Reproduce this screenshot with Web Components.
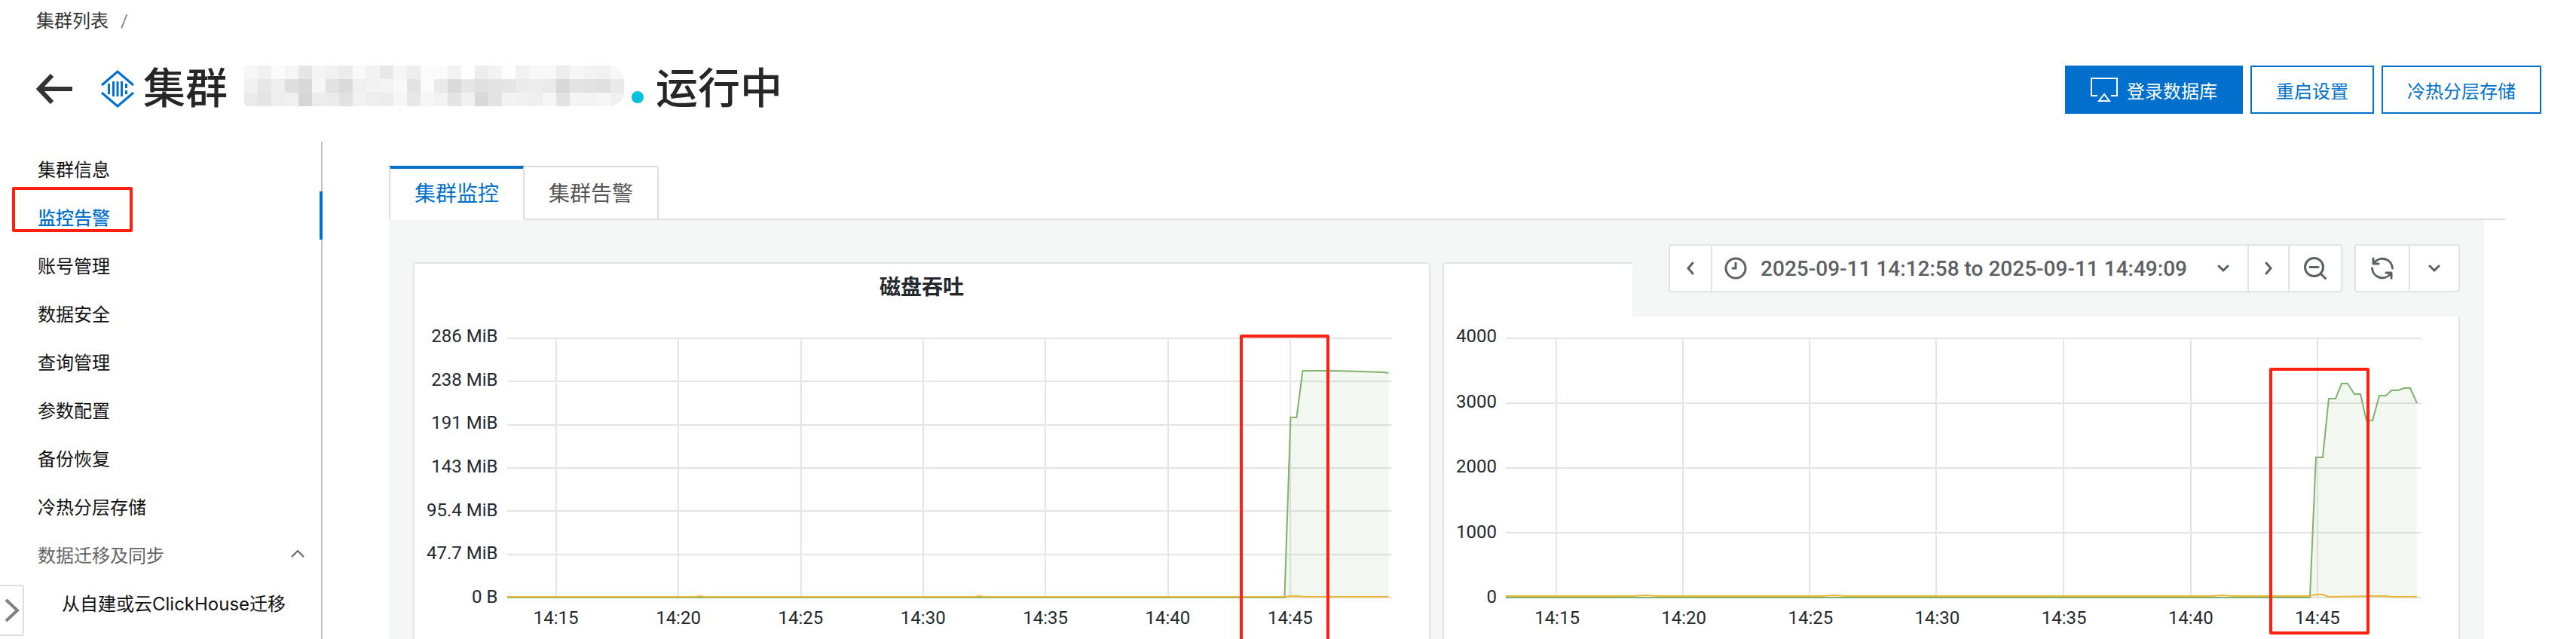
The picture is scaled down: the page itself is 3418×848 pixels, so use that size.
<!DOCTYPE html>
<html lang="zh-CN">
<head>
<meta charset="utf-8">
<title>集群监控</title>
<style>
    body {
        margin: 0;
        background-color: #fff;
        color: #333;
        font-family: Roboto, "Noto Sans CJK SC", sans-serif;
        font-size: 24px;
    }
</style>
</head>
<body>
<cluster-page>
    <page-crumb slot="crumb">集群列表</page-crumb>
    <cluster-header slot="header" name="集群" status="运行中">
        <action-button type="primary" icon="screen">登录数据库</action-button>
        <action-button>重启设置</action-button>
        <action-button>冷热分层存储</action-button>
    </cluster-header>
    <side-nav slot="nav">
        <nav-item>集群信息</nav-item>
        <nav-item active>监控告警</nav-item>
        <nav-item>账号管理</nav-item>
        <nav-item>数据安全</nav-item>
        <nav-item>查询管理</nav-item>
        <nav-item>参数配置</nav-item>
        <nav-item>备份恢复</nav-item>
        <nav-item>冷热分层存储</nav-item>
        <nav-item group>数据迁移及同步</nav-item>
        <nav-item sub>从自建或云ClickHouse迁移</nav-item>
    </side-nav>
    <tab-bar tabs="集群监控,集群告警"></tab-bar>
    <monitor-board>
        <time-toolbar slot="toolbar" range="2025-09-11 14:12:58 to 2025-09-11 14:49:09"></time-toolbar>
        <chart-panel name="磁盘吞吐" source="disk"></chart-panel>
        <chart-panel source="rows"></chart-panel>
    </monitor-board>
</cluster-page>
<drawer-handle></drawer-handle>

<script>
const ICONS = {
    back: `<svg width="48" height="40" viewBox="0 0 48 40" fill="none" stroke="#333" stroke-width="6"><path d="M4 20H48M21 2L4 20L21 38"/></svg>`,
    logo: `<svg width="44" height="50" viewBox="0 0 44 50" fill="none" stroke="#0070cc" stroke-width="3"><path d="M1 20L22 2L43 20M1 30L22 48L43 30"/><path d="M10.500 18V32M16.500 15V35M22 15V35M27.500 15V35M33.500 18V24M33.500 27V32"/></svg>`,
    screen: `<svg width="36" height="32" viewBox="0 0 36 32" fill="none" stroke="#fff" stroke-width="2"><path d="M9 24H1V1H35V24H27"/><path d="M18 22L11 31H25Z"/></svg>`,
    left: `<svg width="12" height="20" viewBox="0 0 12 20" fill="none" stroke="#5c6064" stroke-width="3" stroke-linecap="round"><path d="M9 3L3 10L9 17"/></svg>`,
    right: `<svg width="12" height="20" viewBox="0 0 12 20" fill="none" stroke="#5c6064" stroke-width="3" stroke-linecap="round"><path d="M3 3L9 10L3 17"/></svg>`,
    down: `<svg width="16" height="12" viewBox="0 0 16 12" fill="none" stroke="#5c6064" stroke-width="3" stroke-linecap="round"><path d="M2 3L8 9L14 3"/></svg>`,
    up: `<svg width="18" height="12" viewBox="0 0 18 12" fill="none" stroke="#666" stroke-width="2"><path d="M1 10L9 2L17 10"/></svg>`,
    clock: `<svg width="30" height="30" viewBox="0 0 30 30" fill="none" stroke="#5c6064" stroke-width="3" stroke-linecap="round"><circle cx="15" cy="15" r="13"/><path d="M15 8V15H11"/></svg>`,
    zoomOut: `<svg width="30" height="30" viewBox="0 0 30 30" fill="none" stroke="#5c6064" stroke-width="3" stroke-linecap="round"><circle cx="13.500" cy="13.500" r="12"/><path d="M8 13.500H19M22 22L28.500 28.500"/></svg>`,
    refresh: `<svg width="30" height="30" viewBox="0 0 30 30" fill="none" stroke="#5c6064" stroke-width="3" stroke-linecap="round" stroke-linejoin="round"><path d="M3 2V9H10M4 8A13.500 13.500 0 0 1 28.500 15M1.500 15A13.500 13.500 0 0 0 26 22M20 21H27V28"/></svg>`
};

// grey level of every mosaic tile, row by row
const MOSAIC = [
    'f7 f1 fb f6 e5 f4 f1 ec f9 f2 e8 f6 ee fa fa f3 ff ed f3 fd f2 f8 f8 ed f6 f3 f1 f7',
    'f1 e7 ef df d9 f5 e2 da f0 f2 f4 f9 e3 fb ea db e6 e0 e3 e5 eb ec ea d8 e3 e2 df ea',
    'ea e5 ee f0 d6 ec eb e1 f2 ee ec f6 e8 f5 f3 e3 f1 d9 e3 f3 f1 ef f6 e2 f4 f4 f6 f0'
];

const CHARTS = {
    disk: {
        width: 1174,
        rows: ['286 MiB', '238 MiB', '191 MiB', '143 MiB', '95.4 MiB', '47.7 MiB', '0 B'],
        first: 65,
        step: 162.3,
        green: [[0, 345], [1031, 345], [1039, 106], [1047, 106], [1055, 44], [1082, 44], [1115, 44.5], [1162, 46], [1169, 47]],
        yellow: [[0, 344], [250, 344], [256, 343], [262, 344], [620, 344], [626, 343], [632, 344], [1031, 344], [1039, 343], [1047, 343], [1060, 344], [1169, 344]],
        mark: 'left: 972px; width: 111px; top: -4px; bottom: -80px'
    },
    rows: {
        width: 1214,
        rows: ['4000', '3000', '2000', '1000', '0'],
        first: 67,
        step: 168.1,
        green: [[0, 345], [1066, 345], [1074, 159], [1083, 159], [1091, 81], [1100, 81], [1108, 61], [1116, 61], [1125, 75], [1133, 75], [1141, 110], [1149, 110], [1158, 77], [1167, 77], [1174, 70], [1183, 70], [1191, 67], [1199, 67], [1208, 87]],
        yellow: [[0, 343], [170, 343], [185, 342], [200, 343], [420, 343], [435, 342], [450, 343], [935, 343], [950, 342], [965, 343], [1066, 343], [1074, 341], [1083, 341], [1091, 344], [1160, 343], [1167, 343], [1175, 344], [1208, 344]],
        mark: 'left: 1013px; width: 125px; top: 40px; bottom: -48px'
    }
};

const TIMES = ['14:15', '14:20', '14:25', '14:30', '14:35', '14:40', '14:45'];

class BaseElement extends HTMLElement {
    constructor() {
        super();
        this.attachShadow({ mode: 'open' });
    }
    connectedCallback() {
        this.shadowRoot.innerHTML = `${this.getStyles()}${this.getTemplate()}`;
    }
}

class ClusterPage extends BaseElement {
    getTemplate() {
        return `
            <slot name="crumb"></slot>
            <slot name="header"></slot>
            <div class="body">
                <slot name="nav"></slot>
                <main><slot></slot></main>
            </div>
        `;
    }
    getStyles() {
        return `
            <style>
                :host {
                    display: flex;
                    flex-direction: column;
                    height: 100vh;
                    overflow: hidden;
                }
                .body {
                    display: flex;
                    flex: 1;
                    min-height: 0;
                }
                main {
                    display: flex;
                    flex-direction: column;
                    flex: 1;
                    min-width: 0;
                    padding: 32px 94px 0 88px;
                }
            </style>
        `;
    }
}

class PageCrumb extends BaseElement {
    getTemplate() {
        return `<a href="#"><slot></slot></a><span>/</span>`;
    }
    getStyles() {
        return `
            <style>
                :host {
                    display: flex;
                    gap: 16px;
                    padding: 0 48px;
                    line-height: 56px;
                }
                a {
                    color: #333;
                    text-decoration: none;
                }
                span {
                    color: #888;
                }
            </style>
        `;
    }
}

class ClusterHeader extends BaseElement {
    getMosaic() {
        const tiles = MOSAIC.map((row, y) => row.split(' ').map((g, x) =>
            `<rect x="${x * 18}" y="${y * 18}" width="18" height="18" fill="#${g}${g}${g}"/>`).join('')).join('');
        return `<svg class="mosaic" width="504" height="54" viewBox="0 0 504 54">${tiles}</svg>`;
    }
    getTemplate() {
        return `
            <button class="back" aria-label="返回">${ICONS.back}</button>
            ${ICONS.logo}
            <h1>${this.getAttribute('name')}</h1>
            ${this.getMosaic()}
            <div class="status"><i></i>${this.getAttribute('status')}</div>
            <div class="actions"><slot></slot></div>
        `;
    }
    getStyles() {
        return `
            <style>
                :host {
                    display: flex;
                    align-items: center;
                    height: 124px;
                    margin-bottom: 8px;
                    padding: 0 46px 0 48px;
                    color: #262626;
                }
                svg {
                    display: block;
                }
                .back {
                    margin-right: 38px;
                    padding: 0;
                    border: 0;
                    background: none;
                }
                h1, .status {
                    margin: 0;
                    font-size: 56px;
                    font-weight: 500;
                    line-height: 80px;
                    white-space: nowrap;
                }
                h1 {
                    margin: 0 22px 0 12px;
                }
                .mosaic {
                    margin-bottom: 8px;
                    border-radius: 0 20px 20px 6px;
                }
                .status i {
                    display: inline-block;
                    width: 16px;
                    height: 16px;
                    margin: 0 16px 0 10px;
                    border-radius: 50%;
                    background-color: #00c1de;
                }
                .actions {
                    display: flex;
                    gap: 10px;
                    margin-left: auto;
                    padding-top: 2px;
                }
            </style>
        `;
    }
}

class ActionButton extends BaseElement {
    getTemplate() {
        return `<button>${ICONS[this.getAttribute('icon')] || ''}<slot></slot></button>`;
    }
    getStyles() {
        return `
            <style>
                :host {
                    display: block;
                    --fg: #0070cc;
                    --bg: #fff;
                }
                :host([type="primary"]) {
                    --fg: #fff;
                    --bg: #0070cc;
                }
                button {
                    display: flex;
                    align-items: center;
                    gap: 12px;
                    height: 64px;
                    padding: 0 32px;
                    border: 2px solid #0070cc;
                    background-color: var(--bg);
                    color: var(--fg);
                    font: inherit;
                    font-size: 24px;
                    white-space: nowrap;
                }
            </style>
        `;
    }
}

class SideNav extends BaseElement {
    getTemplate() {
        return `<nav><slot></slot></nav>`;
    }
    getStyles() {
        return `
            <style>
                :host {
                    display: block;
                    box-sizing: border-box;
                    width: 428px;
                    padding-top: 2px;
                    background: linear-gradient(#c1c1c1, #c1c1c1) right / 2px 100% no-repeat;
                    font-family: Inter, "Noto Sans CJK SC", sans-serif;
                }
            </style>
        `;
    }
}

class NavItem extends BaseElement {
    getTemplate() {
        return `
            <a href="#"><slot></slot></a>
            ${this.hasAttribute('group') ? ICONS.up : ''}
            ${this.hasAttribute('active') ? '<div class="mark"></div>' : ''}
        `;
    }
    getStyles() {
        return `
            <style>
                :host {
                    display: flex;
                    position: relative;
                    align-items: center;
                    justify-content: space-between;
                    box-sizing: border-box;
                    height: 64px;
                    padding: 2px 20px 0 50px;
                    border-right: 4px solid transparent;
                    color: #111;
                }
                :host([active]) {
                    border-color: #0070cc;
                    color: #0070cc;
                    font-weight: 500;
                }
                :host([group]) {
                    color: #666;
                }
                :host([sub]) {
                    padding-left: 82px;
                }
                a {
                    color: inherit;
                    text-decoration: none;
                    white-space: nowrap;
                }
                .mark {
                    position: absolute;
                    box-sizing: border-box;
                    left: 16px;
                    top: -6px;
                    width: 160px;
                    height: 60px;
                    border: 4px solid #ff2010;
                    border-radius: 2px;
                }
            </style>
        `;
    }
}

class TabBar extends BaseElement {
    getTemplate() {
        const tabs = this.getAttribute('tabs').split(',');
        return tabs.map((tab, i) =>
            `<button role="tab" aria-selected="${i === 0}">${tab}</button>`).join('') + '<div></div>';
    }
    getStyles() {
        return `
            <style>
                :host {
                    display: flex;
                    height: 72px;
                }
                button {
                    box-sizing: border-box;
                    padding: 0 32px 2px;
                    border: 2px solid #dedede;
                    border-left-width: 0;
                    background-color: #fff;
                    color: #555;
                    font: inherit;
                    font-size: 28px;
                }
                button[aria-selected="true"] {
                    border-left-width: 2px;
                    border-bottom-color: #fff;
                    color: #0070cc;
                    box-shadow: inset 0 2px #0070cc;
                    border-top-color: #0070cc;
                }
                div {
                    flex: 1;
                    border-bottom: 2px solid #dedede;
                }
            </style>
        `;
    }
}

class MonitorBoard extends BaseElement {
    getTemplate() {
        return `
            <div class="panels"><slot></slot></div>
            <div class="toolbar"><slot name="toolbar"></slot></div>
        `;
    }
    getStyles() {
        return `
            <style>
                :host {
                    display: block;
                    position: relative;
                    flex: 1;
                    margin-right: 28px;
                    background-color: #f4f6f5;
                }
                .panels {
                    display: grid;
                    grid-template-columns: 1fr 1fr;
                    gap: 16px;
                    box-sizing: border-box;
                    height: 100%;
                    padding: 56px 32px 0;
                }
                .toolbar {
                    position: absolute;
                    top: 0;
                    right: 0;
                    padding: 32px 32px 32px 48px;
                    background-color: #f4f6f5;
                }
            </style>
        `;
    }
}

class TimeToolbar extends BaseElement {
    getTemplate() {
        return `
            <div class="group">
                <button class="step" aria-label="向前">${ICONS.left}</button>
                <button class="range">${ICONS.clock}<span>${this.getAttribute('range')}</span>${ICONS.down}</button>
                <button class="step" aria-label="向后">${ICONS.right}</button>
                <button class="tool" aria-label="缩小">${ICONS.zoomOut}</button>
            </div>
            <div class="group">
                <button class="tool" aria-label="刷新">${ICONS.refresh}</button>
                <button class="menu" aria-label="刷新间隔">${ICONS.down}</button>
            </div>
        `;
    }
    getStyles() {
        return `
            <style>
                :host {
                    display: flex;
                    gap: 16px;
                }
                .group {
                    display: flex;
                    box-sizing: border-box;
                    height: 64px;
                    border: 2px solid #e2e4e4;
                    border-radius: 4px;
                    background-color: #fff;
                }
                button {
                    display: flex;
                    align-items: center;
                    justify-content: center;
                    padding: 0;
                    border: 0;
                    background: none;
                    color: #5c6064;
                    font: inherit;
                    font-size: 28px;
                    font-weight: 500;
                }
                button + button {
                    border-left: 2px solid #e2e4e4;
                }
                .step {
                    width: 54px;
                }
                .tool {
                    width: 70px;
                }
                .menu {
                    width: 66px;
                }
                .range {
                    padding: 0 24px 0 16px;
                }
                .range span {
                    margin: 0 40px 0 18px;
                    white-space: nowrap;
                }
            </style>
        `;
    }
}

class ChartPanel extends BaseElement {
    getGrid(chart) {
        let d = '';
        chart.rows.forEach((row, i) => {
            d += `M0 ${Math.round(1 + i * 344 / (chart.rows.length - 1))}H${chart.width}`;
        });
        TIMES.forEach((time, i) => {
            d += `M${Math.round(chart.first + i * chart.step)} 0V346`;
        });
        return d;
    }
    getTemplate() {
        const chart = CHARTS[this.getAttribute('source')];
        const last = chart.green[chart.green.length - 1][0];
        return `
            <h2>${this.getAttribute('name') || ''}</h2>
            <div class="chart">
                <div class="rows">${chart.rows.map(row => `<span>${row}</span>`).join('')}</div>
                <div class="plot">
                    <svg viewBox="0 0 ${chart.width} 346" preserveAspectRatio="none">
                        <path class="grid" d="${this.getGrid(chart)}"/>
                        <polygon points="${chart.green.join(' ')} ${last},345 0,345"/>
                        <polyline class="green" points="${chart.green.join(' ')}"/>
                        <polyline class="yellow" points="${chart.yellow.join(' ')}"/>
                    </svg>
                    <div class="mark" style="${chart.mark}"></div>
                </div>
                <div class="times">${TIMES.map(time => `<span>${time}</span>`).join('')}</div>
            </div>
        `;
    }
    getStyles() {
        return `
            <style>
                :host {
                    display: block;
                    min-width: 0;
                    overflow: hidden;
                    border: 2px solid #e2e4e4;
                    border-bottom: 0;
                    border-radius: 6px 6px 0 0;
                    background-color: #fff;
                    color: #24292e;
                }
                h2 {
                    height: 64px;
                    margin: 0 0 34px;
                    font-size: 28px;
                    font-weight: 700;
                    line-height: 64px;
                    text-align: center;
                }
                .chart {
                    display: grid;
                    grid-template-columns: auto 1fr;
                    column-gap: 12px;
                    padding: 0 49px 0 16px;
                    line-height: 28px;
                }
                .rows {
                    display: flex;
                    flex-direction: column;
                    justify-content: space-between;
                    margin: -16px 0 -12px;
                    text-align: right;
                }
                .plot {
                    position: relative;
                    height: 346px;
                }
                .times {
                    display: grid;
                    grid-template-columns: repeat(7, 1fr);
                    grid-column: 2;
                    margin: 12px 54px 0 -16px;
                    text-align: center;
                }
                svg {
                    display: block;
                    width: 100%;
                    height: 100%;
                    fill: none;
                    stroke-width: 2px;
                }
                .grid {
                    stroke: rgba(0, 0, 0, .1);
                    shape-rendering: crispEdges;
                }
                polygon {
                    fill: rgba(126, 178, 109, .1);
                }
                .green {
                    stroke: #7eb26d;
                }
                .yellow {
                    stroke: #eab839;
                }
                .mark {
                    position: absolute;
                    border: 4px solid #ff2010;
                    border-radius: 2px;
                }
            </style>
        `;
    }
}

class DrawerHandle extends BaseElement {
    getTemplate() {
        return `
            <button aria-label="展开">
                <svg width="20" height="32" viewBox="0 0 20 32" fill="none" stroke="#808080" stroke-width="4"><path d="M2 2L17 16L2 30"/></svg>
            </button>
        `;
    }
    getStyles() {
        return `
            <style>
                :host {
                    display: block;
                    position: fixed;
                    left: 0;
                    bottom: 4px;
                }
                button {
                    display: flex;
                    align-items: center;
                    box-sizing: border-box;
                    width: 32px;
                    height: 68px;
                    padding: 0 0 0 6px;
                    border: 2px solid #dedede;
                    border-left: 0;
                    border-radius: 0 4px 4px 0;
                    background-color: #fff;
                }
            </style>
        `;
    }
}

customElements.define('cluster-page', ClusterPage);
customElements.define('page-crumb', PageCrumb);
customElements.define('cluster-header', ClusterHeader);
customElements.define('action-button', ActionButton);
customElements.define('side-nav', SideNav);
customElements.define('nav-item', NavItem);
customElements.define('tab-bar', TabBar);
customElements.define('monitor-board', MonitorBoard);
customElements.define('time-toolbar', TimeToolbar);
customElements.define('chart-panel', ChartPanel);
customElements.define('drawer-handle', DrawerHandle);
</script>
</body>
</html>
